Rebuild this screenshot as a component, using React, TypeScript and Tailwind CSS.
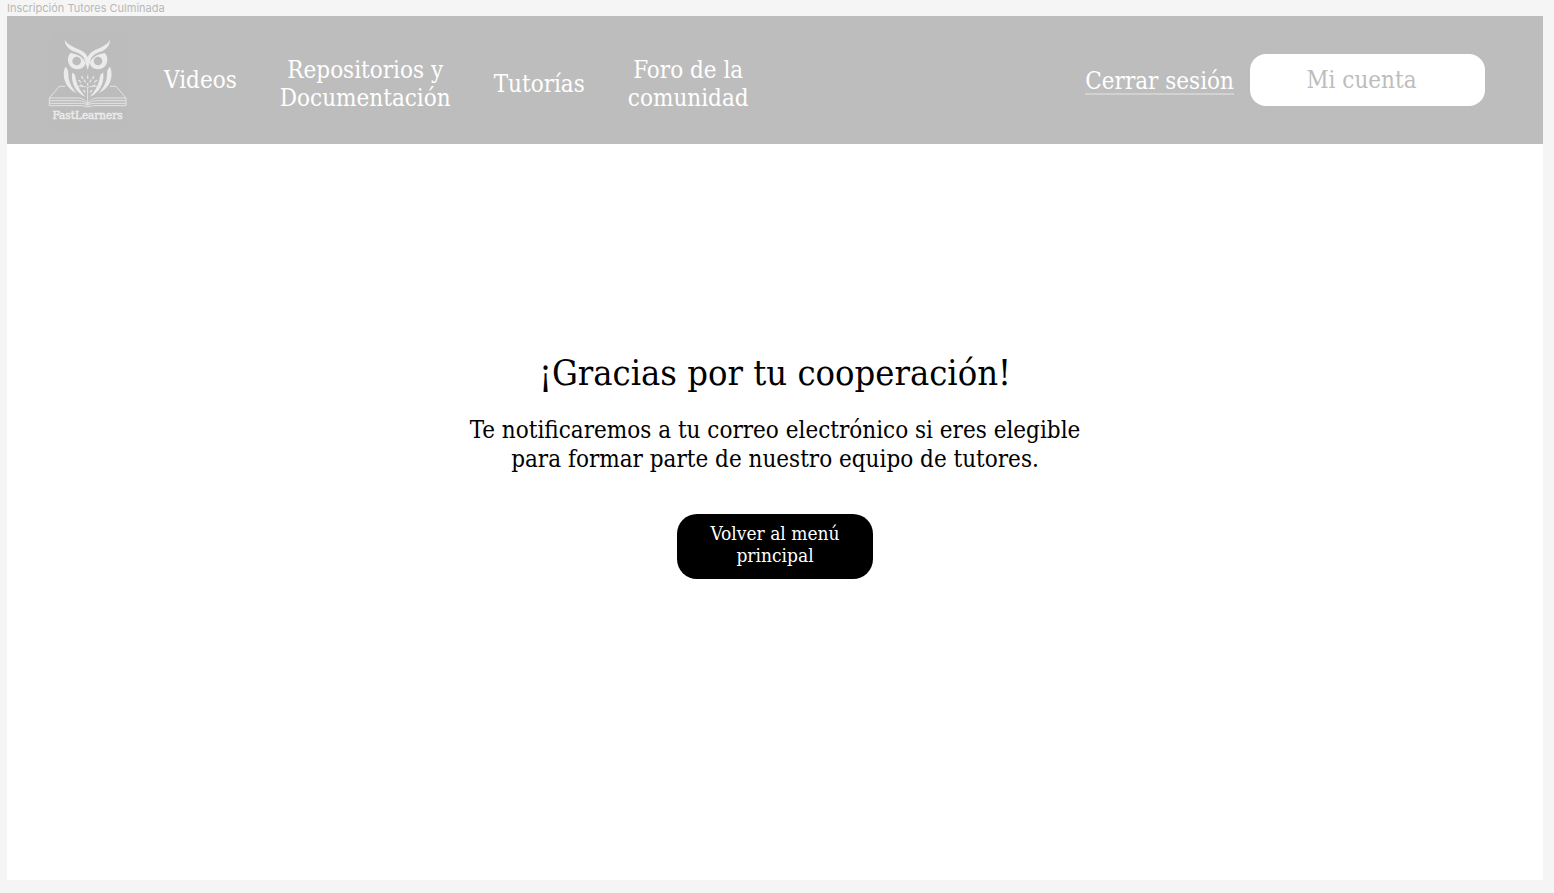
function OwlLogo() {
  return (
    <svg viewBox="33 18 246 300" className="h-[100px] w-[82px] shrink-0" role="img" aria-label="FastLearners">
      <path d="M52 24H260V36H272V300H260V318H52V300H33V42H52Z" fill="#bcbcbc" />
      <g fill="#ebebeb">
        <path d="M86 47C96 64 116 70 134 79C145 85 151 91 155 99C159 91 165 85 176 79C194 70 213 64 222 47C222 67 208 79 189 85C174 91 166 98 163 110L155 138L147 110C144 98 136 91 121 85C102 79 87 67 86 47Z" />
        <path
          fillRule="evenodd"
          d="M104 87C94 95 93 116 103 127C114 139 135 139 145 126L149 119C144 102 130 92 104 87ZM122 98A13 13 0 1 1 122 124A13 13 0 1 1 122 98Z"
        />
        <path
          fillRule="evenodd"
          d="M206 87C216 95 217 116 207 127C196 139 175 139 165 126L161 119C166 102 180 92 206 87ZM186 98A13 13 0 1 0 186 124A13 13 0 1 0 186 98Z"
        />
        <path d="M88 128C81 145 83 160 87 171C93 188 104 199 122 207C104 188 97 170 97 150C97 140 94 133 88 128Z" />
        <path d="M222 128C229 145 227 160 223 171C217 188 206 199 188 207C206 188 213 170 213 150C213 140 216 133 222 128Z" />
        <path d="M108 146C105 178 119 205 149 219C130 200 121 180 118 157C117 151 113 148 108 146Z" />
        <path d="M202 146C205 178 191 205 161 219C180 200 189 180 192 157C193 151 197 148 202 146Z" />
      </g>
      <g fill="none" stroke="#e6e6e6" strokeWidth="4" strokeLinecap="round">
        <path d="M137 158L140 163M155 156V163M173 158L170 163M128 169L134 174M145 168L148 174M165 168L162 174M182 169L176 174M134 183L141 188M155 178V184M176 183L169 188M143 199L147 204M167 199L163 204" />
      </g>
      <g fill="none" stroke="#e4e4e4" strokeWidth="3" strokeLinejoin="round">
        <path d="M88 187H70L40 222V245H138C145 245 149 249 155 249C161 249 165 245 172 245H270V222L240 187H222" />
        <path d="M119 187H138C147 187 152 188 155 192C158 188 163 187 172 187H191M155 190V245" />
        <path d="M40 222H125C141 222 150 229 155 241C160 229 169 222 185 222H270" />
        <path d="M40 230H125C141 230 150 235 155 243C160 235 169 230 185 230H270" />
        <path d="M40 238H130C144 238 150 240 155 245C160 240 166 238 180 238H270" />
      </g>
      <text
        x="155"
        y="286"
        textAnchor="middle"
        fontSize="35"
        fill="#ebebeb"
        stroke="#ebebeb"
        strokeWidth="1.6"
        className="font-['DejaVu_Serif_Condensed','DejaVu_Serif',serif]"
      >
        FastLearners
      </text>
    </svg>
  );
}

export default function App() {
  return (
    <div className="flex min-h-screen flex-col bg-[#f5f5f5] pr-[11px] pb-[13px] pl-[7px] font-['DejaVu_Serif_Condensed','DejaVu_Serif',serif]">
      <p className="h-4 font-['Inter',sans-serif] text-[11px] leading-4 text-[#b8b8b8]">
        Inscripción Tutores Culminada
      </p>

      <div className="flex flex-1 flex-col bg-white">
        <header className="flex h-32 items-center justify-between bg-[#bdbdbd] pr-[58px] pl-10 text-[24px] leading-7 text-white">
          <div className="flex items-center">
            <OwlLogo />
            <nav className="flex items-center gap-[43px] pl-[35px] text-center">
              <a href="#videos" className="whitespace-nowrap">
                Videos
              </a>
              <div className="flex items-center gap-[43px] pt-2">
                <a href="#repositorios" className="whitespace-nowrap">
                  Repositorios y<br />
                  Documentación
                </a>
                <a href="#tutorias" className="whitespace-nowrap">
                  Tutorías
                </a>
                <a href="#foro" className="whitespace-nowrap">
                  Foro de la<br />
                  comunidad
                </a>
              </div>
            </nav>
          </div>

          <div className="flex items-center gap-4">
            <a href="#salir" className="border-b-2 border-[#d2d2d2] pt-1 leading-6 whitespace-nowrap">
              Cerrar sesión
            </a>
            <button type="button" className="h-[52px] w-[235px] rounded-2xl bg-white pr-3 text-[#bdbdbd]">
              Mi cuenta
            </button>
          </div>
        </header>

        <main className="flex flex-col items-center px-6 pt-[205px] text-center text-black">
          <h1 className="text-[36px] leading-[48px]">¡Gracias por tu cooperación!</h1>
          <p className="mt-[19px] text-[24px] leading-[29px]">
            Te notificaremos a tu correo electrónico si eres elegible
            <br />
            para formar parte de nuestro equipo de tutores.
          </p>
          <button
            type="button"
            className="mt-10 h-[65px] w-[196px] rounded-[20px] bg-black px-6 pb-1.5 text-[19px] leading-[22px] text-white"
          >
            Volver al menú principal
          </button>
        </main>
      </div>
    </div>
  );
}
